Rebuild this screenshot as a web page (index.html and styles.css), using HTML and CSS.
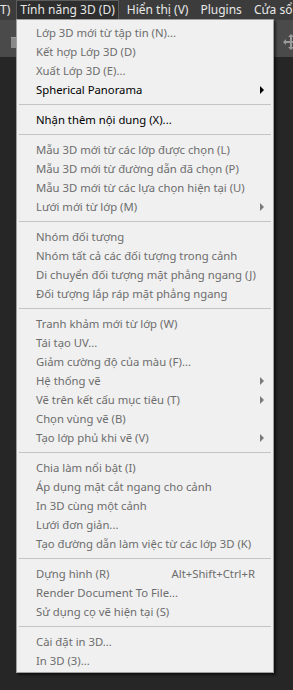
FILE: index.html
```html
<!DOCTYPE html>
<html lang="vi">
<head>
    <meta charset="UTF-8">
    <meta name="viewport" content="width=device-width, initial-scale=1.0">
    <title>Tính năng 3D</title>
    <link rel="stylesheet" href="styles.css">
</head>
<body>
    <!-- Menu bar -->
    <nav class="menubar">
        <span class="menubar-item cut">T)</span>
        <span class="menubar-item active">Tính năng 3D (D)</span>
        <span class="menubar-item">Hiển thị (V)</span>
        <span class="menubar-item">Plugins</span>
        <span class="menubar-item">Cửa sổ (W)</span>
    </nav>

    <!-- Options bar under the menus -->
    <div class="toolbar">
        <div class="tool-swatch"></div>
        <svg class="move-icon" width="16" height="18" viewBox="0 0 16 18">
            <path d="M8 1 L11 4 H9 V8 H13 V6 L16 9 L13 12 V10 H9 V14 H11 L8 17 L5 14 H7 V10 H3 V12 L0 9 L3 6 V8 H7 V4 H5 Z" fill="#9a9a9a"/>
        </svg>
    </div>

    <div class="workspace"></div>

    <!-- Open dropdown -->
    <ul class="dropdown">
        <li class="item">Lớp 3D mới từ tập tin (N)...</li>
        <li class="item">Kết hợp Lớp 3D (D)</li>
        <li class="item">Xuất Lớp 3D (E)...</li>
        <li class="item enabled">Spherical Panorama<span class="arrow"></span></li>
        <li class="separator"></li>
        <li class="item enabled">Nhận thêm nội dung (X)...</li>
        <li class="separator"></li>
        <li class="item">Mẫu 3D mới từ các lớp được chọn (L)</li>
        <li class="item">Mẫu 3D mới từ đường dẫn đã chọn (P)</li>
        <li class="item">Mẫu 3D mới từ các lựa chọn hiện tại (U)</li>
        <li class="item">Lưới mới từ lớp (M)<span class="arrow"></span></li>
        <li class="separator"></li>
        <li class="item">Nhóm đối tượng</li>
        <li class="item">Nhóm tất cả các đối tượng trong cảnh</li>
        <li class="item">Di chuyển đối tượng mặt phẳng ngang (J)</li>
        <li class="item">Đối tượng lắp ráp mặt phẳng ngang</li>
        <li class="separator"></li>
        <li class="item">Tranh khảm mới từ lớp (W)</li>
        <li class="item">Tái tạo UV...</li>
        <li class="item">Giảm cường độ của màu (F)...</li>
        <li class="item">Hệ thống vẽ<span class="arrow"></span></li>
        <li class="item">Vẽ trên kết cấu mục tiêu (T)<span class="arrow"></span></li>
        <li class="item">Chọn vùng vẽ (B)</li>
        <li class="item">Tạo lớp phủ khi vẽ (V)<span class="arrow"></span></li>
        <li class="separator"></li>
        <li class="item">Chia làm nổi bật (I)</li>
        <li class="item">Áp dụng mặt cắt ngang cho cảnh</li>
        <li class="item">In 3D cùng một cảnh</li>
        <li class="item">Lưới đơn giản...</li>
        <li class="item">Tạo đường dẫn làm việc từ các lớp 3D (K)</li>
        <li class="separator"></li>
        <li class="item">Dựng hình (R)<span class="shortcut">Alt+Shift+Ctrl+R</span></li>
        <li class="item">Render Document To File...</li>
        <li class="item">Sử dụng cọ vẽ hiện tại (S)</li>
        <li class="separator"></li>
        <li class="item">Cài đặt in 3D...</li>
        <li class="item">In 3D (3)...</li>
    </ul>
</body>
</html>
```

FILE: styles.css
```css
html, body {
    margin: 0;
    padding: 0;
}
body {
    font-family: 'Noto Sans', 'Open Sans', sans-serif;
    font-size: 11.3px;
    background-color: #262626;
    height: 690px;
    overflow: hidden;
    position: relative;
}

.menubar {
    height: 20px;
    background-color: #3c3c3c;
    display: flex;
    align-items: stretch;
    white-space: nowrap;
    overflow: hidden;
}
.menubar-item {
    color: #e8e8e8;
    font-size: 12px;
    line-height: 18px;
    padding: 0 3px;
    margin-right: 4px;
    border: 1px solid transparent;
}
.menubar-item.cut {
    margin-left: -4px;
    margin-right: 2px;
}
.menubar-item.active {
    background-color: #2e2e2e;
    border-color: #5c5c5c;
    border-bottom: none;
}

.toolbar {
    height: 37px;
    background-color: #4a4a4a;
    display: flex;
    align-items: center;
    justify-content: space-between;
    padding: 0 0 0 11px;
}
.tool-swatch {
    width: 6px;
    height: 10px;
    margin-top: 8px;
    background-color: #8a8a8a;
    border-top: 1px solid #9c9c9c;
}
.move-icon {
    margin-right: -6px;
    margin-top: 6px;
}

.dropdown {
    position: absolute;
    top: 19px;
    left: 16px;
    width: 256px;
    margin: 0;
    padding: 3px 0 2px;
    list-style: none;
    background-color: #f0f0f0;
    border: 1px solid #a0a0a0;
    box-shadow: 2px 2px 2px rgba(0, 0, 0, 0.55);
}
.item {
    height: 19px;
    line-height: 19px;
    padding: 0 9px 0 19px;
    color: #6d6d6d;
    display: flex;
    align-items: center;
    white-space: nowrap;
}
.item.enabled {
    color: #000;
}
.shortcut {
    margin-left: auto;
    margin-right: 9px;
}
.arrow {
    margin-left: auto;
    width: 0;
    height: 0;
    border-top: 4px solid transparent;
    border-bottom: 4px solid transparent;
    border-left: 4px solid #7a7a7a;
}
.enabled .arrow {
    border-left-color: #000;
}
.separator {
    height: 5px;
    margin: 0 2px 5px;
    border-bottom: 1px solid #c4c4c4;
}
```
